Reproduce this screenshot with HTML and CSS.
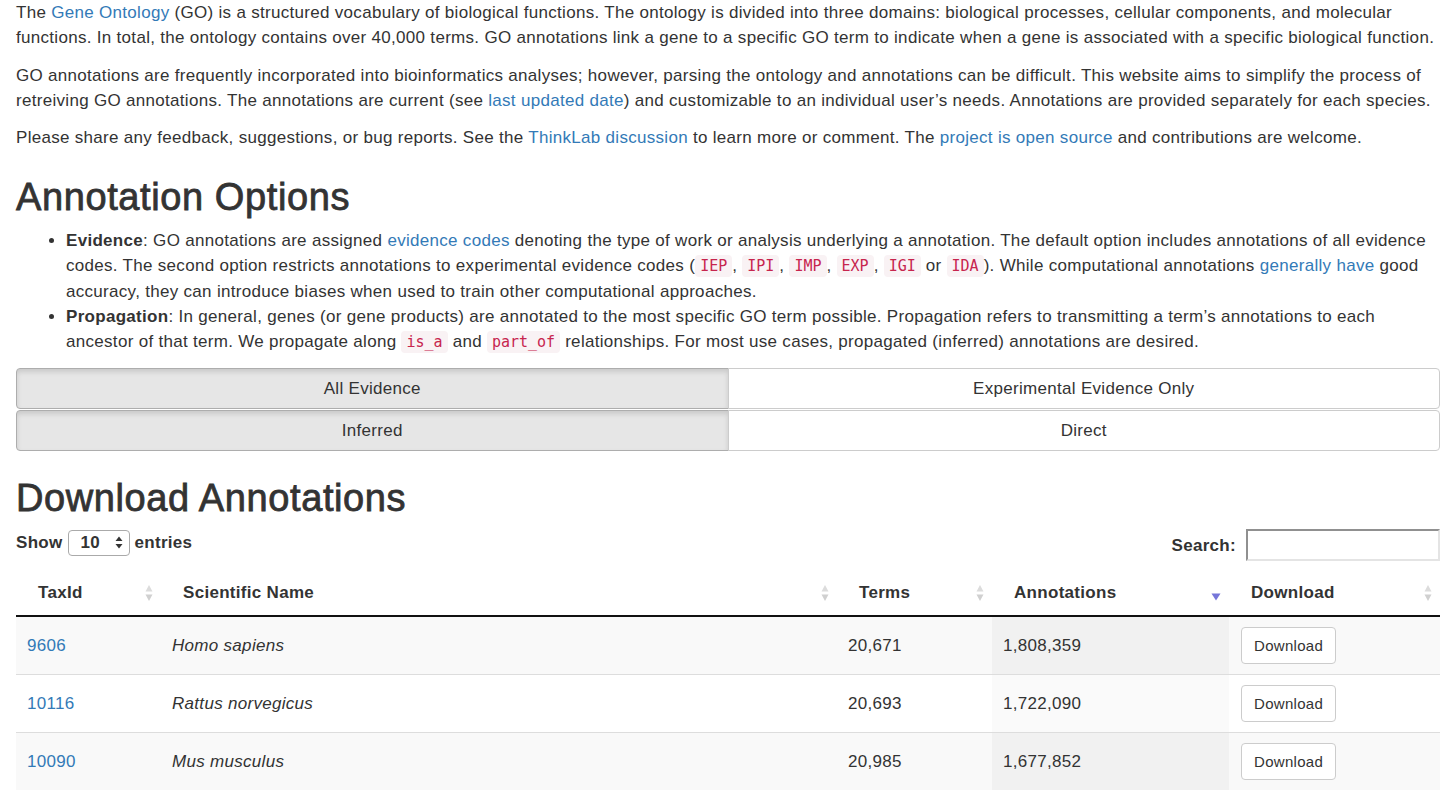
FILE: index.html
```html
<!DOCTYPE html>
<html lang="en">
<head>
<meta charset="utf-8">
<title>GO Annotations</title>
<link rel="stylesheet" href="styles.css">
</head>
<body>
<div class="page">
  <p>The <a href="#">Gene Ontology</a> (GO) is a structured vocabulary of biological functions. The ontology is divided into three domains: biological processes, cellular components, and molecular functions. In total, the ontology contains over 40,000 terms. GO annotations link a gene to a specific GO term to indicate when a gene is associated with a specific biological function.</p>
  <p>GO annotations are frequently incorporated into bioinformatics analyses; however, parsing the ontology and annotations can be difficult. This website aims to simplify the process of retreiving GO annotations. The annotations are current (see <a href="#">last updated date</a>) and customizable to an individual user’s needs. Annotations are provided separately for each species.</p>
  <p>Please share any feedback, suggestions, or bug reports. See the <a href="#">ThinkLab discussion</a> to learn more or comment. The <a href="#">project is open source</a> and contributions are welcome.</p>

  <h2>Annotation Options</h2>
  <ul class="options">
    <li><strong>Evidence</strong>: GO annotations are assigned <a href="#">evidence codes</a> denoting the type of work or analysis underlying a annotation. The default option includes annotations of all evidence codes. The second option restricts annotations to experimental evidence codes (<code>IEP</code>, <code>IPI</code>, <code>IMP</code>, <code>EXP</code>, <code>IGI</code> or <code>IDA</code>). While computational annotations <a href="#">generally have</a> good accuracy, they can introduce biases when used to train other computational approaches.</li>
    <li><strong>Propagation</strong>: In general, genes (or gene products) are annotated to the most specific GO term possible. Propagation refers to transmitting a term’s annotations to each ancestor of that term. We propagate along <code>is_a</code> and <code>part_of</code> relationships. For most use cases, propagated (inferred) annotations are desired.</li>
  </ul>

  <div class="btn-group">
    <button class="opt active">All Evidence</button>
    <button class="opt">Experimental Evidence Only</button>
  </div>
  <div class="btn-group">
    <button class="opt active">Inferred</button>
    <button class="opt">Direct</button>
  </div>

  <h2 class="dl-title">Download Annotations</h2>
  <div class="dt-top">
    <label class="dt-length">Show <span class="select-box">10<svg width="8" height="13" viewBox="0 0 8 13"><path d="M4 0.5 L7.5 5 L0.5 5 Z M4 12.5 L7.5 8 L0.5 8 Z" fill="#333"/></svg></span> entries</label>
    <label class="dt-search">Search: <input type="search" class="search-input"></label>
  </div>

  <table class="dt">
    <colgroup>
      <col class="c1"><col class="c2"><col class="c3"><col class="c4"><col class="c5">
    </colgroup>
    <thead>
      <tr>
        <th><div class="th-inner"><span>TaxId</span><svg class="sort" width="8" height="18" viewBox="0 0 8 18"><path d="M4 1 L7.5 7.5 L0.5 7.5 Z" fill="#dcdcdc"/><path d="M4 17 L7.5 10.5 L0.5 10.5 Z" fill="#d0d0d0"/></svg></div></th>
        <th><div class="th-inner"><span>Scientific Name</span><svg class="sort" width="8" height="18" viewBox="0 0 8 18"><path d="M4 1 L7.5 7.5 L0.5 7.5 Z" fill="#dcdcdc"/><path d="M4 17 L7.5 10.5 L0.5 10.5 Z" fill="#d0d0d0"/></svg></div></th>
        <th><div class="th-inner"><span>Terms</span><svg class="sort" width="8" height="18" viewBox="0 0 8 18"><path d="M4 1 L7.5 7.5 L0.5 7.5 Z" fill="#dcdcdc"/><path d="M4 17 L7.5 10.5 L0.5 10.5 Z" fill="#d0d0d0"/></svg></div></th>
        <th><div class="th-inner"><span>Annotations</span><svg class="sort" width="10" height="18" viewBox="0 0 10 18"><path d="M0.5 9.5 L9.5 9.5 L5 16.5 Z" fill="#7676d9"/></svg></div></th>
        <th><div class="th-inner"><span>Download</span><svg class="sort" width="8" height="18" viewBox="0 0 8 18"><path d="M4 1 L7.5 7.5 L0.5 7.5 Z" fill="#dcdcdc"/><path d="M4 17 L7.5 10.5 L0.5 10.5 Z" fill="#d0d0d0"/></svg></div></th>
      </tr>
    </thead>
    <tbody>
      <tr class="odd">
        <td><a href="#">9606</a></td>
        <td><em>Homo sapiens</em></td>
        <td>20,671</td>
        <td class="sorted">1,808,359</td>
        <td><button class="dl-btn">Download</button></td>
      </tr>
      <tr class="even">
        <td><a href="#">10116</a></td>
        <td><em>Rattus norvegicus</em></td>
        <td>20,693</td>
        <td class="sorted">1,722,090</td>
        <td><button class="dl-btn">Download</button></td>
      </tr>
      <tr class="odd">
        <td><a href="#">10090</a></td>
        <td><em>Mus musculus</em></td>
        <td>20,985</td>
        <td class="sorted">1,677,852</td>
        <td><button class="dl-btn">Download</button></td>
      </tr>
    </tbody>
  </table>
</div>
</body>
</html>
```

FILE: styles.css
```css
html, body {
  margin: 0;
  padding: 0;
  background: #fff;
}
body {
  font-family: "Liberation Sans", Arial, sans-serif;
  font-size: 17px;
  letter-spacing: 0.3px;
  line-height: 25px;
  color: #333;
}
.page {
  padding: 0 7px 0 16px;
}
a {
  color: #337ab7;
  text-decoration: none;
}
p {
  margin: 0 0 12.5px;
}
h2 {
  font-family: "Liberation Sans", Arial, sans-serif;
  font-weight: 500;
  font-size: 38px;
  letter-spacing: 0.6px;
  line-height: 40px;
  margin: 27px 0 11px;
  color: #333;
  -webkit-text-stroke: 0.8px #333;
}
.options {
  margin: 0 0 13px;
  padding-left: 50px;
}
code {
  font-family: "DejaVu Sans Mono", "Liberation Mono", monospace;
  font-size: 15px;
  letter-spacing: 0;
  padding: 2px 5px;
  color: #c7254e;
  background: #f9f2f4;
  border-radius: 4px;
}
.btn-group {
  display: flex;
  margin-bottom: 1px;
}
.opt {
  flex: 1 1 0;
  font-family: inherit;
  font-size: 17px;
  letter-spacing: 0.3px;
  line-height: 25px;
  padding: 7px 16px;
  color: #333;
  background: #fff;
  border: 1px solid #ccc;
  margin: 0;
  cursor: pointer;
}
.opt:first-child {
  border-radius: 4px 0 0 4px;
}
.opt:last-child {
  border-radius: 0 4px 4px 0;
  margin-left: -1px;
}
.opt.active {
  background: #e6e6e6;
  border-color: #adadad;
  box-shadow: inset 0 3px 5px rgba(0, 0, 0, 0.125);
}
.dl-title {
  margin-top: 27px;
  margin-bottom: 10px;
}
.dt-top {
  display: flex;
  justify-content: space-between;
  align-items: center;
  height: 34px;
  margin-bottom: 8px;
}
.dt-length, .dt-search {
  font-weight: bold;
  display: flex;
  align-items: center;
}
.dt-length {
  margin-top: -5px;
}
.select-box {
  display: inline-flex;
  align-items: center;
  justify-content: space-between;
  box-sizing: border-box;
  width: 62px;
  height: 26px;
  margin: 0 5px;
  padding: 0 6px 0 12px;
  border: 1px solid #aaa;
  border-radius: 4px;
  font-weight: bold;
}
.search-input {
  box-sizing: border-box;
  width: 194px;
  height: 32px;
  margin-left: 10px;
  border: 2px inset #e4e4e4;
  background: #fff;
  padding: 0 4px;
}
.dt {
  width: 100%;
  table-layout: fixed;
  border-collapse: collapse;
  border-spacing: 0;
}
.c1 { width: 145px; }
.c2 { width: 676px; }
.c3 { width: 155px; }
.c4 { width: 237px; }
.c5 { width: 211px; }
.dt th {
  text-align: left;
  font-weight: bold;
  padding: 10px 8px 10px 22px;
  border-bottom: 2px solid #111;
  vertical-align: middle;
}
.th-inner {
  display: flex;
  justify-content: space-between;
  align-items: center;
}
.sort {
  display: block;
  flex: none;
  margin-top: 1px;
}
.dt td {
  padding: 10px 11px;
  border-top: 1px solid #ddd;
  vertical-align: middle;
}
.dt tbody tr:first-child td {
  border-top: none;
}
.dt tr.odd td {
  background: #f9f9f9;
}
.dt tr.odd td.sorted {
  background: #f1f1f1;
}
.dt tr.even td.sorted {
  background: #fafafa;
}
.dt td:nth-child(5) {
  padding-left: 12px;
}
.dl-btn {
  font-family: inherit;
  font-size: 15px;
  letter-spacing: 0.3px;
  line-height: 23px;
  padding: 6px 12px;
  color: #333;
  background: #fff;
  border: 1px solid #ccc;
  border-radius: 4px;
  cursor: pointer;
}
```
